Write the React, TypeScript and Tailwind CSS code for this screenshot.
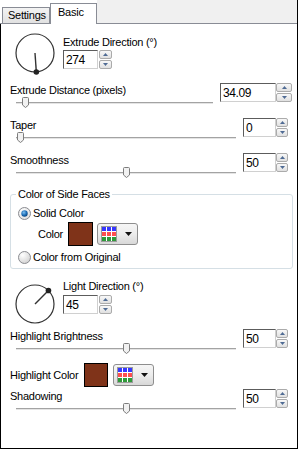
import React from "react";

const BROWN = "#7f3319";

function Dial({ angle }: { angle: number }) {
  const r = 19;
  const rad = (angle * Math.PI) / 180;
  const x = 25 + r * Math.cos(rad);
  const y = 23 - r * Math.sin(rad);
  return (
    <svg width="50" height="46" viewBox="0 0 50 46">
      <circle cx="25" cy="23" r={r} fill="none" stroke="#333" strokeWidth="1.2" />
      <line x1="25" y1="23" x2={x} y2={y} stroke="#333" strokeWidth="1.4" />
      <circle cx={x} cy={y} r="2.8" fill="#222" />
    </svg>
  );
}

function Arrow({ up }: { up?: boolean }) {
  return (
    <svg width="5" height="3" viewBox="0 0 5 3">
      <path d={up ? "M0 3 L2.5 0 L5 3 Z" : "M0 0 L5 0 L2.5 3 Z"} fill="#4f6b94" />
    </svg>
  );
}

function Spinner({ className }: { className: string }) {
  return (
    <div className={`flex flex-col gap-[1px] h-[19px] ${className}`}>
      <div className="flex-1 flex items-center justify-center rounded-[2px] border border-[#ababab] bg-gradient-to-b from-[#f8f8f8] to-[#e0e0e0]">
        <Arrow up />
      </div>
      <div className="flex-1 flex items-center justify-center rounded-[2px] border border-[#ababab] bg-gradient-to-b from-[#f8f8f8] to-[#e0e0e0]">
        <Arrow />
      </div>
    </div>
  );
}

function NumBox({ value, className }: { value: string; className: string }) {
  return (
    <div
      className={`h-[19px] flex items-center pl-[2px] border border-t-[#5c5c5c] border-l-[#5c5c5c] border-r-[#d0d0d0] border-b-[#d0d0d0] bg-white text-[12px] tracking-[-0.4px] ${className}`}
    >
      {value}
    </div>
  );
}

function Slider({ thumb }: { thumb: number }) {
  return (
    <div className="relative h-[12px] ml-[6px] pt-[5px]">
      <div className="h-[3px] border-t border-[#a3a3a3] bg-[#e4e4e4] border-b border-b-white" />
      <svg
        className="absolute top-0"
        style={{ left: thumb }}
        width="7"
        height="11"
        viewBox="0 0 7 11"
      >
        <path
          d="M0.5 1.5 Q0.5 0.5 1.5 0.5 H5.5 Q6.5 0.5 6.5 1.5 V8 L3.5 10.5 L0.5 8 Z"
          fill="#f1f1f1"
          stroke="#7d7d7d"
        />
      </svg>
    </div>
  );
}

function SliderRow({
  label,
  value,
  thumb,
  className,
}: {
  label: string;
  value: string;
  thumb: number;
  className: string;
}) {
  return (
    <div className={`flex ${className}`}>
      <div className="w-[226px]">
        <div>{label}</div>
        <Slider thumb={thumb} />
      </div>
      <div className="flex ml-[7px]">
        <NumBox value={value} className="w-[33px]" />
        <Spinner className="w-[12px]" />
      </div>
    </div>
  );
}

function Radio({ checked }: { checked?: boolean }) {
  return (
    <svg width="13" height="13" viewBox="0 0 13 13">
      <defs>
        <radialGradient id={checked ? "rgOn" : "rgOff"} cx="0.35" cy="0.3" r="0.8">
          <stop offset="0" stopColor="#ffffff" />
          <stop offset="1" stopColor={checked ? "#dcdcdc" : "#cfcfcf"} />
        </radialGradient>
        <radialGradient id="dot" cx="0.4" cy="0.35" r="0.7">
          <stop offset="0" stopColor="#7fc0f0" />
          <stop offset="0.6" stopColor="#1a6bb5" />
          <stop offset="1" stopColor="#0b3f75" />
        </radialGradient>
      </defs>
      <circle cx="6.5" cy="6.5" r="6" fill={checked ? "url(#rgOn)" : "url(#rgOff)"} stroke="#8a8c91" />
      {checked && <circle cx="6.5" cy="6.5" r="3.2" fill="url(#dot)" />}
    </svg>
  );
}

function ColorPicker() {
  const rows = ["#3737ff", "#ff4f4f", "#2f9a3a"];
  return (
    <div className="w-[41px] h-[22px] flex items-center pl-[3px] rounded-[3px] border border-[#8e8e8e] bg-gradient-to-b from-[#f6f6f6] via-[#ececec] to-[#d8d8d8]">
      <svg width="16" height="16" viewBox="0 0 16 16">
        <rect x="0.5" y="0.5" width="15" height="15" fill="#fff" stroke="#9c9c9c" />
        {rows.map((c, i) =>
          [0, 1, 2].map((j) => (
            <rect key={`${i}-${j}`} x={1 + j * 5} y={1 + i * 5} width="4" height="4" fill={c} />
          ))
        )}
      </svg>
      <svg className="ml-[8px]" width="7" height="4" viewBox="0 0 7 4">
        <path d="M0 0 H7 L3.5 4 Z" fill="#111" />
      </svg>
    </div>
  );
}

function Swatch({ className }: { className: string }) {
  return <div className={`border border-black ${className}`} style={{ background: BROWN }} />;
}

export default function App() {
  return (
    <div className="w-[298px] h-[449px] flex flex-col border-r border-black bg-white font-['Liberation_Sans',Arial,sans-serif] text-[11px] leading-[14px] tracking-[-0.25px] text-black">
      {/* tab strip */}
      <div className="flex items-end h-[24px] shrink-0">
        <div className="w-[2px] h-full border-b border-[#898c95]" />
        <div className="w-[48px] h-[17px] pl-[5px] border border-[#898c95] bg-gradient-to-b from-[#f3f3f3] to-[#e1e1e1]">
          Settings
        </div>
        <div className="w-[47px] h-[21px] pl-[7px] pt-[1px] border border-b-0 border-[#898c95] bg-white">
          Basic
        </div>
        <div className="flex-1 h-full bg-[#f0f0f0] border-b border-[#898c95]" />
      </div>

      <div className="flex-1 flex flex-col pl-[9px] pr-[4px] border-l border-b border-black">
        <div className="flex mt-[6px]">
          <div className="w-[53px]">
            <Dial angle={274} />
          </div>
          <div className="pt-[5px]">
            <div>Extrude Direction (°)</div>
            <div className="flex mt-[1px]">
              <NumBox value="274" className="w-[35px]" />
              <Spinner className="w-[13px] ml-[1px]" />
            </div>
          </div>
        </div>

        <div className="flex mt-[7px]">
          <div className="w-[203px]">
            <div>Extrude Distance (pixels)</div>
            <Slider thumb={6} />
          </div>
          <div className="flex ml-[7px]">
            <NumBox value="34.09" className="w-[56px]" />
            <Spinner className="w-[16px]" />
          </div>
        </div>

        <SliderRow label="Taper" value="0" thumb={1} className="mt-[9px]" />
        <SliderRow label="Smoothness" value="50" thumb={107} className="mt-[9px]" />

        <fieldset className="mt-[8px] min-w-0 pl-[7px] pt-[5px] pb-[4px] border border-[#d5dfe5] rounded-[3px]">
          <legend className="px-[2px] -ml-[2px]">Color of Side Faces</legend>
          <div className="flex items-center gap-[2px] h-[14px]">
            <Radio checked />
            <span>Solid Color</span>
          </div>
          <div className="flex items-center h-[24px] mt-[2px] pl-[20px]">
            <span className="w-[30px]">Color</span>
            <Swatch className="w-[25px] h-[24px]" />
            <div className="ml-[4px]">
              <ColorPicker />
            </div>
          </div>
          <div className="flex items-center gap-[2px] h-[14px] mt-[4px]">
            <Radio />
            <span>Color from Original</span>
          </div>
        </fieldset>

        <div className="flex mt-[10px]">
          <div className="w-[53px] pt-[2px]">
            <Dial angle={45} />
          </div>
          <div>
            <div>Light Direction (°)</div>
            <div className="flex mt-[2px]">
              <NumBox value="45" className="w-[35px]" />
              <Spinner className="w-[13px] ml-[1px]" />
            </div>
          </div>
        </div>

        <SliderRow label="Highlight Brightness" value="50" thumb={107} className="mt-[2px]" />

        <div className="flex items-center h-[24px] mt-[8px]">
          <span className="w-[74px]">Highlight Color</span>
          <Swatch className="w-[24px] h-[24px]" />
          <div className="ml-[5px]">
            <ColorPicker />
          </div>
        </div>

        <SliderRow label="Shadowing" value="50" thumb={107} className="mt-[2px]" />
      </div>
    </div>
  );
}
